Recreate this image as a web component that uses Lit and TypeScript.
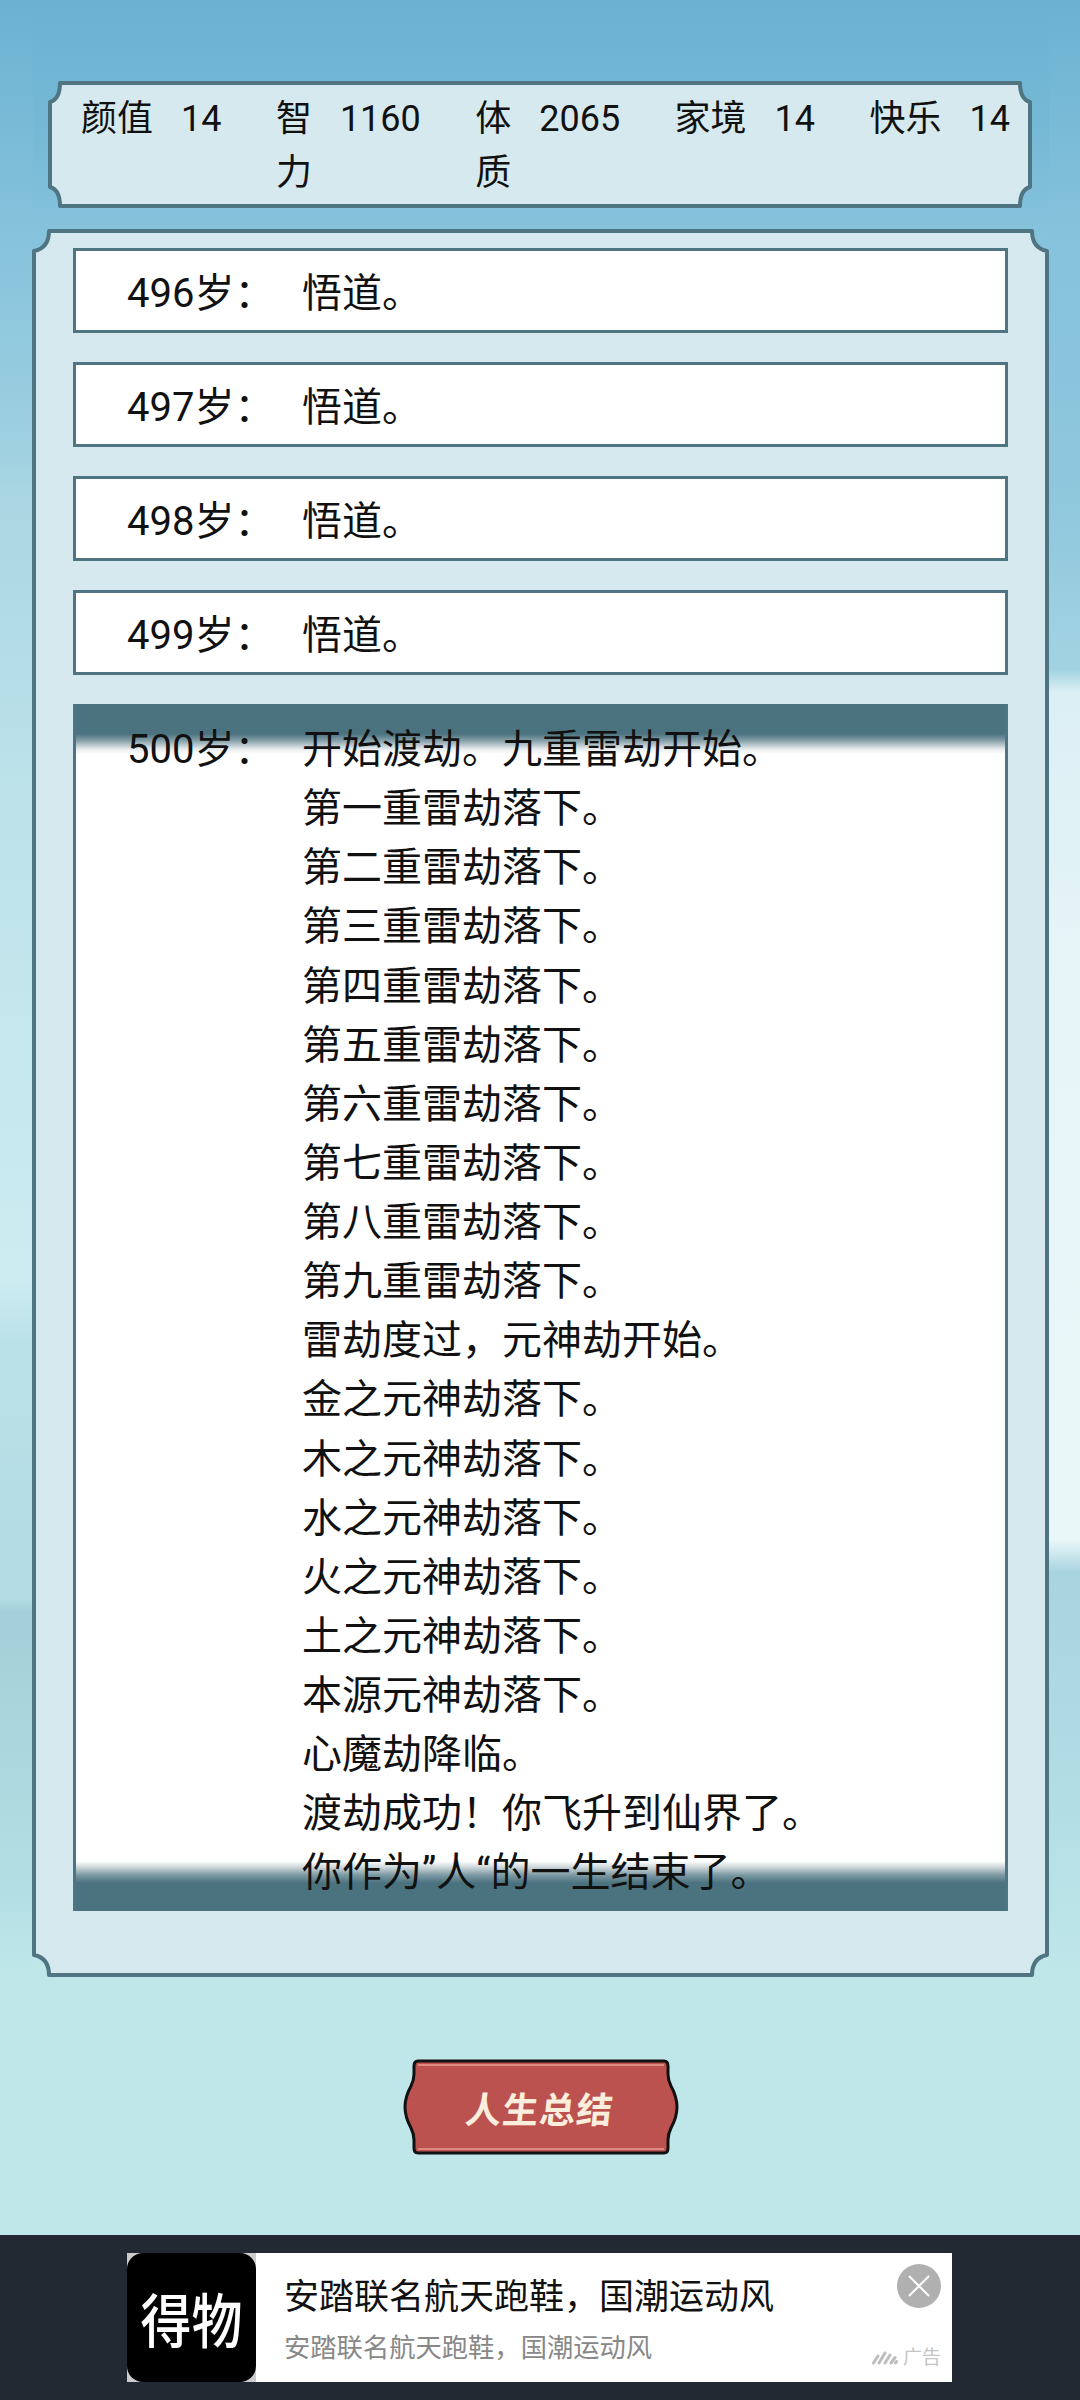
import { LitElement, html, css, svg } from "lit";
import { customElement } from "lit/decorators.js";

const rows = [496, 497, 498, 499];
const lines = [
  "开始渡劫。九重雷劫开始。", "第一重雷劫落下。", "第二重雷劫落下。", "第三重雷劫落下。", "第四重雷劫落下。",
  "第五重雷劫落下。", "第六重雷劫落下。", "第七重雷劫落下。", "第八重雷劫落下。", "第九重雷劫落下。",
  "雷劫度过，元神劫开始。", "金之元神劫落下。", "木之元神劫落下。", "水之元神劫落下。", "火之元神劫落下。",
  "土之元神劫落下。", "本源元神劫落下。", "心魔劫降临。", "渡劫成功！你飞升到仙界了。", "你作为”人“的一生结束了。",
];
const stats = [
  { label: "颜值", value: "14", narrow: false },
  { label: "智力", value: "1160", narrow: true },
  { label: "体质", value: "2065", narrow: true },
  { label: "家境", value: "14", narrow: false },
  { label: "快乐", value: "14", narrow: false },
];

/** Outline of a panel whose four corners are scooped inward. */
function panelPath(w: number, h: number, nx: number, ny: number, i: number) {
  const l = i, t = i, r = w - i, b = h - i;
  return `M${l + nx} ${t} H${r - nx} Q${r - nx} ${t + ny * 0.85} ${r} ${t + ny} V${b - ny} Q${r - nx} ${b - ny * 0.85} ${r - nx} ${b} H${l + nx} Q${l + nx} ${b - ny * 0.85} ${l} ${b - ny} V${t + ny} Q${l + nx} ${t + ny * 0.85} ${l + nx} ${t} Z`;
}

@customElement("app-root")
export class AppRoot extends LitElement {
  static styles = css`
    :host {
      display: flex;
      flex-direction: column;
      width: 1080px;
      height: 2400px;
      overflow: hidden;
      font-family: Roboto, "Noto Sans CJK SC", sans-serif;
      color: #111;
      background:
        linear-gradient(180deg, #6bb2d1 0, #85c2dc 230px, #9ccfe0 430px, #aad7e3 500px, #bde2ea 800px, #cdecf2 1280px, #bbe1e8 1340px, #b2dbe3 1600px, #a4cfd8 1612px, #b4dfe4 1900px, #bfe7ea 1976px) left top / 33px 100% no-repeat,
        linear-gradient(180deg, #6bb2d1 0, #85c2dc 230px, #8fc7dd 500px, #a2d3e2 670px, #dceff4 692px, #e6f5f8 1000px, #eaf7f9 1540px, #a9d4df 1572px, #b3dde5 1800px, #bfe7ea 1976px) right top / 31px 100% no-repeat,
        linear-gradient(180deg, #6bb2d1 0, #74b8d5 120px, #85c2dc 230px, #a4d3e3 620px, #bfe7ea 1976px, #bfe7ea 2240px);
    }
    .panel { position: relative; box-sizing: border-box; }
    .panel > svg { position: absolute; inset: 0; z-index: 0; display: block; }
    .panel > .content { position: relative; z-index: 1; }
    .top { width: 984px; height: 127px; margin: 81px 0 0 48px; }
    .stats {
      display: flex;
      justify-content: space-between;
      box-sizing: border-box;
      padding: 11px 22px 0 33px;
      font-size: 36px;
      line-height: 54px;
    }
    .stat { display: flex; gap: 28px; align-items: flex-start; }
    .label { width: 72px; }
    .label.narrow { width: 36px; }
    .main { width: 1017px; height: 1748px; margin: 21px 0 0 32px; }
    .log {
      display: flex;
      flex-direction: column;
      gap: 29px;
      box-sizing: border-box;
      padding: 19px 41px 0 41px;
      font-size: 40px;
      line-height: 59.13px;
    }
    .entry {
      display: flex;
      box-sizing: border-box;
      border: 3px solid #4f7482;
      background: #fff;
      padding: 13px 0 0 51px;
      height: 85px;
    }
    .age { width: 175px; flex: none; }
    .entry.last {
      height: 1207px;
      padding-top: 16px;
      border-width: 0 3px;
      background: linear-gradient(180deg, #4b727f 0, #4b727f 30px, #8aa3ac 37px, #e6ebed 45px, #fff 50px, #fff calc(100% - 50px), #cfd8db calc(100% - 44px), #7d9aa4 calc(100% - 36px), #4b727f calc(100% - 28px), #4b727f 100%);
    }
    .button-wrap { display: flex; justify-content: center; margin-top: 82px; padding-left: 1px; }
    .button { position: relative; width: 276px; height: 96px; display: flex; align-items: center; justify-content: center; }
    .button svg { position: absolute; inset: 0; }
    .button span {
      position: relative;
      font-family: "Noto Sans CJK SC", sans-serif;
      font-size: 36px;
      font-weight: 700;
      letter-spacing: 1px;
      color: #fbeedd;
      transform: skewX(-6deg);
    }
    .ad-bar {
      margin-top: auto;
      height: 165px;
      box-sizing: border-box;
      background: #222933;
      padding: 18px 1px 0 0;
      display: flex;
      justify-content: center;
    }
    .ad {
      position: relative;
      width: 825px;
      height: 129px;
      background: #fff;
      display: flex;
    }
    .logo {
      width: 129px;
      height: 129px;
      flex: none;
      background: #ccc;
    }
    .logo-inner {
      width: 129px;
      height: 129px;
      border-radius: 16px;
      background: #000;
      color: #fff;
      display: flex;
      align-items: center;
      justify-content: center;
      font-family: "Noto Sans CJK SC", sans-serif;
      font-size: 51px;
      font-weight: 500;
    }
    .logo-inner span { display: block; transform: scaleY(1.15); white-space: nowrap; }
    .ad-text { padding: 0 0 0 28px; }
    .ad-title { font-size: 35px; line-height: 50px; margin-top: 20px; color: #111; white-space: nowrap; }
    .ad-sub { font-size: 26.3px; line-height: 38px; margin-top: 6px; color: #888; white-space: nowrap; }
    .close { position: absolute; right: 11px; top: 11px; width: 44px; height: 44px; display: block; }
    .ad-mark {
      position: absolute;
      right: 11px;
      bottom: 11px;
      display: flex;
      align-items: center;
      gap: 5px;
      font-size: 19px;
      line-height: 26px;
      color: #c4c4c4;
    }
  `;

  private frame(w: number, h: number, nx: number, ny: number, sw: number) {
    return html`<svg width=${w} height=${h} viewBox="0 0 ${w} ${h}">
      ${svg`<path d=${panelPath(w, h, nx, ny, sw / 2)} fill="#d6e9ee" stroke="#4f7482" stroke-width=${sw} stroke-linejoin="round"></path>`}
    </svg>`;
  }

  render() {
    return html`
      <section class="panel top">
        ${this.frame(984, 127, 10, 19, 4)}
        <div class="content stats">
          ${stats.map(
            (s) => html`<div class="stat"><span class="label ${s.narrow ? "narrow" : ""}">${s.label}</span><span>${s.value}</span></div>`
          )}
        </div>
      </section>

      <section class="panel main">
        ${this.frame(1017, 1748, 15, 20, 4)}
        <div class="content log">
          ${rows.map((a) => html`<div class="entry"><div class="age">${a}岁：</div><div>悟道。</div></div>`)}
          <div class="entry last">
            <div class="age">500岁：</div>
            <div>${lines.map((l) => html`<div>${l}</div>`)}</div>
          </div>
        </div>
      </section>

      <div class="button-wrap">
        <div class="button">
          <svg width="276" height="96" viewBox="0 0 276 96">
            <path d="M15 2 H261 Q265 2 265 7 V15 Q265 21 268 27 Q274 38 274 48 Q274 58 268 69 Q265 75 265 81 V89 Q265 94 261 94 H15 Q11 94 11 89 V81 Q11 75 8 69 Q2 58 2 48 Q2 38 8 27 Q11 21 11 15 V7 Q11 2 15 2 Z" fill="#bc524f" stroke="#111" stroke-width="3"></path>
            <path d="M15 6 H261 M15 90 H261" stroke="#dd8a80" stroke-width="2" fill="none"></path>
          </svg>
          <span>人生总结</span>
        </div>
      </div>

      <footer class="ad-bar">
        <div class="ad">
          <div class="logo"><div class="logo-inner"><span>得物</span></div></div>
          <div class="ad-text">
            <div class="ad-title">安踏联名航天跑鞋，国潮运动风</div>
            <div class="ad-sub">安踏联名航天跑鞋，国潮运动风</div>
          </div>
          <svg class="close" viewBox="0 0 44 44">
            <circle cx="22" cy="22" r="22" fill="#b0b0b0"></circle>
            <path d="M12 12 L32 32 M32 12 L12 32" stroke="#fff" stroke-width="2" fill="none"></path>
          </svg>
          <div class="ad-mark">
            <svg width="26" height="14" viewBox="0 0 26 14">
              <path d="M1.5 12 L6 5 M7 12 L13 2 M13 12 L18 4 M19 12 L23 6.5 M23.5 12 L24.5 10.5" stroke="#bdbdbd" stroke-width="3" stroke-linecap="round" fill="none"></path>
            </svg>
            <span>广告</span>
          </div>
        </div>
      </footer>
    `;
  }
}
